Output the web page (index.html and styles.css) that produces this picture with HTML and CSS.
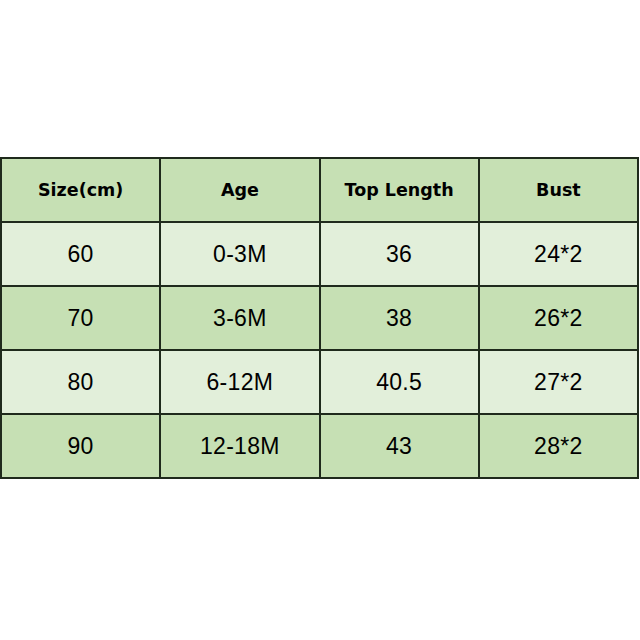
FILE: index.html
```html
<!DOCTYPE html>
<html>
<head>
<meta charset="utf-8">
<link rel="stylesheet" href="styles.css">
</head>
<body>
<div class="page">
<table class="size-table">
  <thead>
    <tr><th>Size(cm)</th><th>Age</th><th>Top Length</th><th>Bust</th></tr>
  </thead>
  <tbody>
    <tr class="light"><td>60</td><td>0-3M</td><td>36</td><td>24*2</td></tr>
    <tr class="dark"><td>70</td><td>3-6M</td><td>38</td><td>26*2</td></tr>
    <tr class="light"><td>80</td><td>6-12M</td><td>40.5</td><td>27*2</td></tr>
    <tr class="dark"><td>90</td><td>12-18M</td><td>43</td><td>28*2</td></tr>
  </tbody>
</table>
</div>
</body>
</html>
```
FILE: styles.css
```css
html, body {
  margin: 0;
  padding: 0;
  background: #ffffff;
}
.page {
  width: 640px;
  height: 640px;
  padding-top: 157px;
  box-sizing: border-box;
}
.size-table {
  width: 639px;
  margin-left: 0;
  border-collapse: collapse;
  table-layout: fixed;
}
.size-table th,
.size-table td {
  border: 2px solid #1f2a1c;
  height: 62px;
  padding: 0;
  text-align: center;
  vertical-align: middle;
  color: #000;
}
.size-table th {
  background: #c6e0b4;
  font-family: "DejaVu Sans", Verdana, sans-serif;
  font-weight: bold;
  font-size: 17.5px;
}
.size-table td {
  font-family: "Liberation Sans", Arial, sans-serif;
  font-size: 23px;
  letter-spacing: 0.3px;
}
.light td { background: #e2efda; }
.dark td { background: #c6e0b4; }
```
